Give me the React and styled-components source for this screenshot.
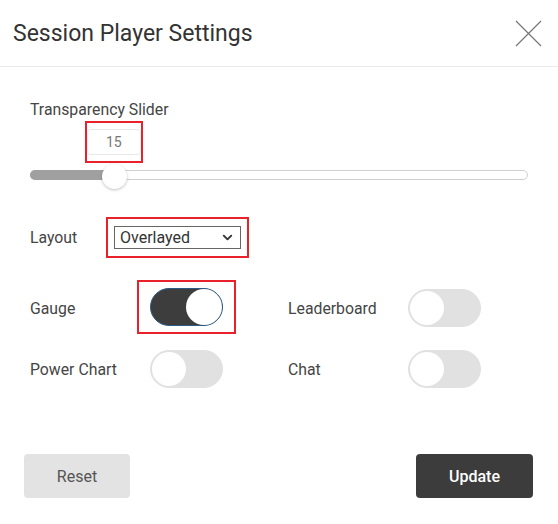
import React, { useState } from "react";
import styled, { createGlobalStyle } from "styled-components";
import { ChevronDown } from "lucide-react";

const GlobalStyle = createGlobalStyle`
  html, body {
    margin: 0;
    padding: 0;
    background: #fff;
  }
  body {
    font-family: Roboto, "Liberation Sans", Arial, sans-serif;
    color: #444;
  }
`;

const Modal = styled.div`
  width: 558px;
  height: 524px;
  background: #fff;
  display: flex;
  flex-direction: column;
  box-sizing: border-box;
`;

const Header = styled.div`
  height: 67px;
  box-sizing: border-box;
  border-bottom: 1px solid #ebebeb;
  display: flex;
  align-items: center;
  justify-content: space-between;
  padding: 0 16px 0 13px;
`;

const Title = styled.h2`
  margin: 0;
  font-size: 23px;
  font-weight: 400;
  color: #333;
`;

const CloseButton = styled.button`
  border: none;
  background: none;
  padding: 0;
  width: 28px;
  height: 28px;
  cursor: pointer;
  display: flex;
  align-items: center;
  justify-content: center;
`;

const Body = styled.div`
  padding: 33px 30px 0 30px;
  display: flex;
  flex-direction: column;
`;

const FieldLabel = styled.div`
  font-size: 15.8px;
  line-height: 19px;
  color: #454545;
`;

// red annotation box drawn over the highlighted control
const Marked = styled.div`
  position: relative;
  display: inline-flex;
  &::after {
    content: "";
    position: absolute;
    top: -${(p) => p.$y}px;
    bottom: -${(p) => p.$y}px;
    left: -${(p) => p.$x}px;
    right: -${(p) => p.$x}px;
    border: 2px solid #e8212b;
    pointer-events: none;
  }
`;

const BubbleRow = styled.div`
  margin-top: 10px;
  height: 26px;
  display: flex;
`;

const ValueBox = styled.div`
  width: 54px;
  height: 26px;
  box-sizing: border-box;
  border: 1px solid #e8e8e8;
  border-left-color: #f3f3f3;
  border-right-color: #f3f3f3;
  border-radius: 4px;
  display: flex;
  align-items: center;
  justify-content: center;
  font-size: 14px;
  color: #777;
`;

const Track = styled.div`
  position: relative;
  margin-top: 15px;
  height: 10px;
  box-sizing: border-box;
  border: 1px solid #cfcfcf;
  border-radius: 5px;
  background: #fff;
`;

const Fill = styled.div`
  background: #a0a0a0;
  border-radius: 5px 0 0 5px;
  margin: -1px 0 0 -1px;
  height: 10px;
`;

const Thumb = styled.div`
  position: absolute;
  top: 50%;
  width: 25px;
  height: 25px;
  margin-top: -11px;
  margin-left: -13px;
  border-radius: 50%;
  background: #fff;
  box-shadow: 0 1px 3px rgba(0, 0, 0, 0.25);
`;

const InlineRow = styled.div`
  display: flex;
  align-items: center;
  margin-top: 46px;
`;

const InlineLabel = styled(FieldLabel)`
  width: 84px;
`;

const SelectWrap = styled.div`
  position: relative;
  width: 127px;
  height: 23px;
`;

const Select = styled.select`
  appearance: none;
  -webkit-appearance: none;
  width: 100%;
  height: 100%;
  box-sizing: border-box;
  border: 1px solid #666;
  border-radius: 0;
  background: #fff;
  font-family: Roboto, "Liberation Sans", Arial, sans-serif;
  font-size: 16px;
  color: #333;
  padding: 0 0 0 5px;
  outline: none;
`;

const Chevron = styled.span`
  position: absolute;
  right: 6px;
  top: 4px;
  pointer-events: none;
  display: flex;
`;

const ToggleGrid = styled.div`
  display: grid;
  grid-template-columns: 120px 138px 120px auto;
  grid-auto-rows: 38px;
  row-gap: 23px;
  align-items: center;
  margin-top: 40px;
`;

const Switch = styled.button`
  width: 73px;
  height: 38px;
  border-radius: 19px;
  box-sizing: border-box;
  padding: 0;
  border: 1px solid ${(p) => (p.$on ? "#2a5a86" : "#e1e1e1")};
  background: ${(p) => (p.$on ? "#3d3d3d" : "#e1e1e1")};
  cursor: pointer;
  display: flex;
  align-items: center;
  justify-content: ${(p) => (p.$on ? "flex-end" : "flex-start")};
`;

const Knob = styled.span`
  width: ${(p) => (p.$on ? 36 : 34)}px;
  height: ${(p) => (p.$on ? 36 : 34)}px;
  margin: 0 ${(p) => (p.$on ? 0 : 1)}px;
  border-radius: 50%;
  background: #fff;
`;

const Footer = styled.div`
  margin-top: auto;
  padding: 0 25px 26px 24px;
  display: flex;
  justify-content: space-between;
`;

const Button = styled.button`
  height: 44px;
  width: ${(p) => (p.$primary ? 117 : 106)}px;
  border: none;
  border-radius: 4px;
  font-family: Roboto, "Liberation Sans", Arial, sans-serif;
  font-size: 16px;
  font-weight: ${(p) => (p.$primary ? 500 : 400)};
  background: ${(p) => (p.$primary ? "#3c3c3c" : "#e3e3e3")};
  color: ${(p) => (p.$primary ? "#fff" : "#555")};
  cursor: pointer;
`;

function Toggle({ on, onChange, marked }) {
  const sw = (
    <Switch $on={on} onClick={onChange}>
      <Knob $on={on} />
    </Switch>
  );
  if (!marked) return <div>{sw}</div>;
  return (
    <div>
      <Marked $x={13} $y={8}>
        {sw}
      </Marked>
    </div>
  );
}

export default function App() {
  const [value] = useState(15);
  const [toggles, setToggles] = useState({
    gauge: true,
    leaderboard: false,
    powerChart: false,
    chat: false,
  });

  const flip = (k) => setToggles((t) => ({ ...t, [k]: !t[k] }));

  // thumb center inside a 498px track with a 26px thumb
  const trackWidth = 498;
  const thumbCenter = 13 + (value / 100) * (trackWidth - 26);

  return (
    <>
      <GlobalStyle />
      <Modal>
        <Header>
          <Title>Session Player Settings</Title>
          <CloseButton aria-label="close">
            <svg width="27" height="27" viewBox="0 0 27 27">
              <path d="M1 1L26 26M26 1L1 26" stroke="#777" strokeWidth="1.2" fill="none" />
            </svg>
          </CloseButton>
        </Header>

        <Body>
          <FieldLabel>Transparency Slider</FieldLabel>
          <BubbleRow style={{ paddingLeft: thumbCenter - 27 }}>
            <Marked $x={2} $y={8}>
              <ValueBox>{value}</ValueBox>
            </Marked>
          </BubbleRow>
          <Track>
            <Fill style={{ width: thumbCenter }} />
            <Thumb style={{ left: thumbCenter }} />
          </Track>

          <InlineRow>
            <InlineLabel>Layout</InlineLabel>
            <Marked $x={8} $y={9}>
              <SelectWrap>
                <Select defaultValue="Overlayed">
                  <option>Overlayed</option>
                  <option>Side by side</option>
                </Select>
                <Chevron>
                  <ChevronDown size={15} strokeWidth={3} color="#333" />
                </Chevron>
              </SelectWrap>
            </Marked>
          </InlineRow>

          <ToggleGrid>
            <FieldLabel>Gauge</FieldLabel>
            <Toggle on={toggles.gauge} onChange={() => flip("gauge")} marked />
            <FieldLabel>Leaderboard</FieldLabel>
            <Toggle on={toggles.leaderboard} onChange={() => flip("leaderboard")} />
            <FieldLabel>Power Chart</FieldLabel>
            <Toggle on={toggles.powerChart} onChange={() => flip("powerChart")} />
            <FieldLabel>Chat</FieldLabel>
            <Toggle on={toggles.chat} onChange={() => flip("chat")} />
          </ToggleGrid>
        </Body>

        <Footer>
          <Button>Reset</Button>
          <Button $primary>Update</Button>
        </Footer>
      </Modal>
    </>
  );
}
